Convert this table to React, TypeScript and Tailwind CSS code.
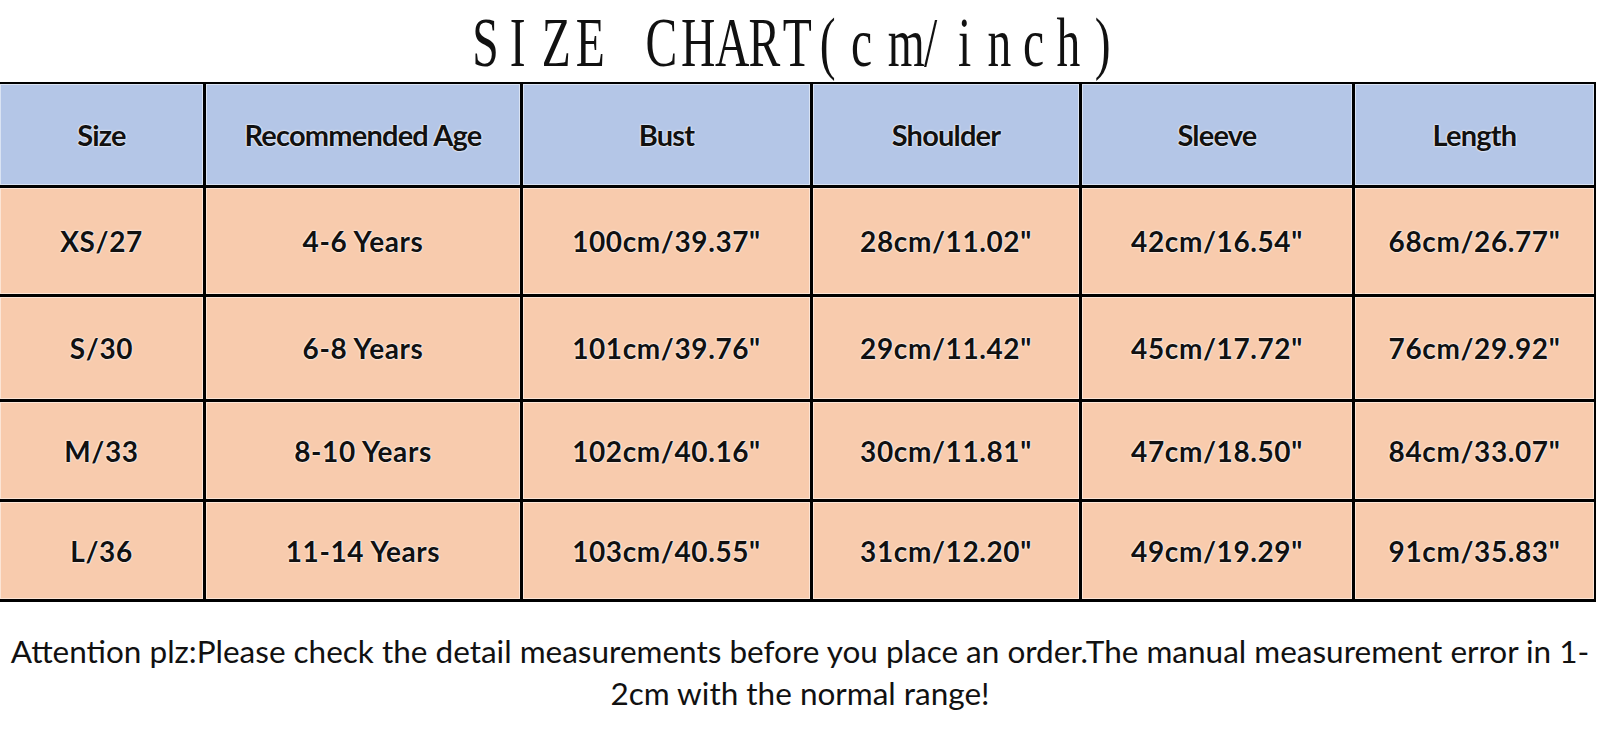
const headers = ["Size", "Recommended Age", "Bust", "Shoulder", "Sleeve", "Length"];

const rows = [
  ["XS/27", "4-6 Years", '100cm/39.37"', '28cm/11.02"', '42cm/16.54"', '68cm/26.77"'],
  ["S/30", "6-8 Years", '101cm/39.76"', '29cm/11.42"', '45cm/17.72"', '76cm/29.92"'],
  ["M/33", "8-10 Years", '102cm/40.16"', '30cm/11.81"', '47cm/18.50"', '84cm/33.07"'],
  ["L/36", "11-14 Years", '103cm/40.55"', '31cm/12.20"', '49cm/19.29"', '91cm/35.83"'],
];

const title = "SIZE CHART(cm/inch)";

const cellFont = { fontFamily: "Lato, 'Open Sans', sans-serif" };

export default function App() {
  return (
    <div className="w-[1600px] h-[734px] bg-white overflow-hidden text-[#111]">
      {/* title is set half-width like the original, every glyph gets the same slot */}
      <div className="h-[82px] flex justify-center pr-[14px] pt-[8px]">
        <h1
          className="text-[70px] leading-[70px] font-normal whitespace-pre flex"
          style={{ fontFamily: "'Liberation Serif', 'Times New Roman', serif" }}
        >
          {title.split("").map((ch, i) => (
            <span key={i} className="inline-block w-[34.4px] text-center">
              <span className="inline-block scale-x-[0.68]">{ch}</span>
            </span>
          ))}
        </h1>
      </div>

      <div
        className="w-[1596px] grid grid-cols-[203px_314px_287px_266px_270px_239px] grid-rows-[101px_106px_102px_97px_97px] gap-[3px] bg-black border-t-2 border-r-2 border-b-[3px] border-black"
        style={cellFont}
      >
        {headers.map((h) => (
          <div
            key={h}
            className="bg-[#b4c6e7] flex items-center justify-center shadow-[inset_0_0_0_1px_rgba(255,255,255,0.5)] text-[29px] font-bold tracking-[-0.8px] [text-shadow:0_0_2px_#fff,0_0_2px_#fff]"
          >
            {h}
          </div>
        ))}
        {rows.map((row, i) =>
          row.map((c, j) => (
            <div
              key={`${i}-${j}`}
              className="bg-[#f8cbad] flex items-center justify-center shadow-[inset_0_0_0_1px_rgba(255,255,255,0.5)] text-[28px] font-bold tracking-[0.6px] [text-shadow:0_0_2px_#fff,0_0_2px_#fff]"
            >
              {c}
            </div>
          ))
        )}
      </div>

      <p
        className="mt-[28px] text-center text-[31.5px] leading-[42px] text-[#111]"
        style={{ fontFamily: "Lato, 'Open Sans', sans-serif" }}
      >
        Attention plz:Please check the detail measurements before you place an order.The manual measurement error in 1-
        <br />
        2cm with the normal range!
      </p>
    </div>
  );
}
